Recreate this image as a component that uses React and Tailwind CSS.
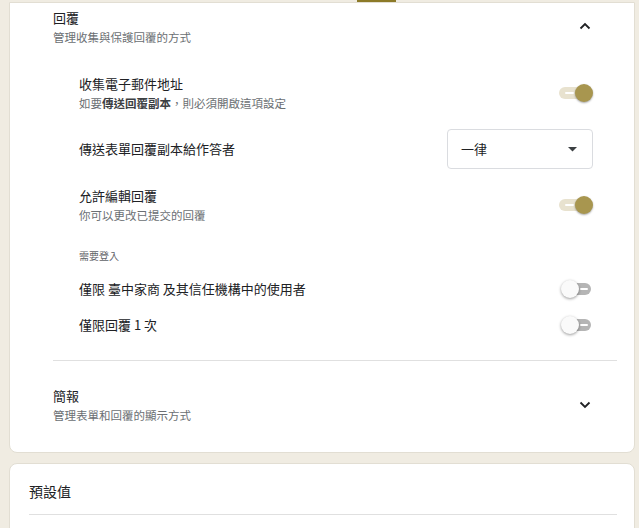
import React from 'react';

const font = { fontFamily: '"Noto Sans CJK TC", "Noto Sans", sans-serif' };

function Toggle({ on }) {
  if (on) {
    return (
      <div className="relative w-[34px] h-[20px] shrink-0">
        <div className="absolute left-0 right-[2px] top-[4px] h-[12px] rounded-full bg-[#e8e2cf]" />
        <div className="absolute left-[6px] top-[9px] w-[9px] h-[2px] bg-white rounded" />
        <div className="absolute right-0 top-[1px] w-[18px] h-[18px] rounded-full bg-[#a8964f] shadow-[0_1px_2px_rgba(0,0,0,0.35)]" />
      </div>
    );
  }
  return (
    <div className="relative w-[34px] h-[20px] shrink-0">
      <div className="absolute left-[6px] right-[2px] top-[4px] h-[12px] rounded-full bg-[#b5b5b5]" />
      <div className="absolute left-[21px] top-[9px] w-[8px] h-[2px] bg-white rounded" />
      <div className="absolute left-[2px] top-[1px] w-[18px] h-[18px] rounded-full bg-[#fafafa] shadow-[0_1px_3px_rgba(0,0,0,0.4)]" />
    </div>
  );
}

function Chevron({ up }) {
  return (
    <svg width="12" height="8" viewBox="0 0 12 8" className="shrink-0">
      {up ? (
        <path d="M1.5 6.5 L6 2 L10.5 6.5" fill="none" stroke="#202124" strokeWidth="1.8" />
      ) : (
        <path d="M1.5 1.5 L6 6 L10.5 1.5" fill="none" stroke="#202124" strokeWidth="1.8" />
      )}
    </svg>
  );
}

export default function App() {
  return (
    <div className="w-[639px] h-[528px] overflow-hidden bg-[#f0ece2] text-[#202124]" style={font}>
      <div className="h-[2px] relative">
        <div className="absolute left-[357px] top-0 w-[39px] h-[2px] bg-[#8c7a28]" />
      </div>

      {/* 回覆 card */}
      <div className="ml-[9px] mr-[4px] bg-white border border-[#e2ded3] rounded-b-lg pl-[43px] pr-[17px] pb-[28px]">
        <div className="flex items-center justify-between pt-[5px]">
          <div>
            <div className="text-[13px] leading-[20px]">回覆</div>
            <div className="text-[11.5px] leading-[18px] text-[#6b6f73]">管理收集與保護回覆的方式</div>
          </div>
          <div className="mr-[26px] -mt-[2px]"><Chevron up /></div>
        </div>

        <div className="pl-[26px] pr-[24px]">
          <div className="flex items-center justify-between mt-[28px]">
            <div>
              <div className="text-[13px] leading-[20px]">收集電子郵件地址</div>
              <div className="text-[11.5px] leading-[18px] text-[#6b6f73]">
                如要<span className="font-semibold text-[#3c4043]">傳送回覆副本</span>，則必須開啟這項設定
              </div>
            </div>
            <Toggle on />
          </div>

          <div className="flex items-center justify-between mt-[17px] h-[40px]">
            <div className="text-[13px] leading-[20px]">傳送表單回覆副本給作答者</div>
            <div className="w-[146px] h-[40px] border border-[#dadce0] rounded flex items-center justify-between pl-[13px] pr-[15px]">
              <span className="text-[13px]">一律</span>
              <svg width="9" height="5" viewBox="0 0 9 5"><path d="M0 0 L9 0 L4.5 4.5 Z" fill="#3c4043" /></svg>
            </div>
          </div>

          <div className="flex items-center justify-between mt-[17px]">
            <div>
              <div className="text-[13px] leading-[20px]">允許編輯回覆</div>
              <div className="text-[11.5px] leading-[18px] text-[#6b6f73]">你可以更改已提交的回覆</div>
            </div>
            <Toggle on />
          </div>

          <div className="mt-[24px] text-[10px] leading-[16px] text-[#5f6368]">需要登入</div>

          <div className="flex items-center justify-between mt-[15px]">
            <div className="text-[13px] leading-[20px]">僅限 臺中家商 及其信任機構中的使用者</div>
            <Toggle />
          </div>

          <div className="flex items-center justify-between mt-[16px]">
            <div className="text-[13px] leading-[20px]">僅限回覆 1 次</div>
            <Toggle />
          </div>
        </div>

        <div className="mt-[25px] border-t border-[#e0e0e0]" />

        <div className="flex items-center justify-between mt-[25px]">
          <div>
            <div className="text-[13px] leading-[20px]">簡報</div>
            <div className="text-[11.5px] leading-[18px] text-[#6b6f73]">管理表單和回覆的顯示方式</div>
          </div>
          <div className="mr-[26px]"><Chevron /></div>
        </div>
      </div>

      {/* 預設值 card */}
      <div className="ml-[9px] mr-[4px] mt-[10px] bg-white border border-[#e2ded3] rounded-t-lg pl-[19px] pr-[17px] pt-[16px] h-[80px]">
        <div className="text-[14px] leading-[22px]">預設值</div>
        <div className="mt-[12px] border-t border-[#e0e0e0]" />
      </div>
    </div>
  );
}
